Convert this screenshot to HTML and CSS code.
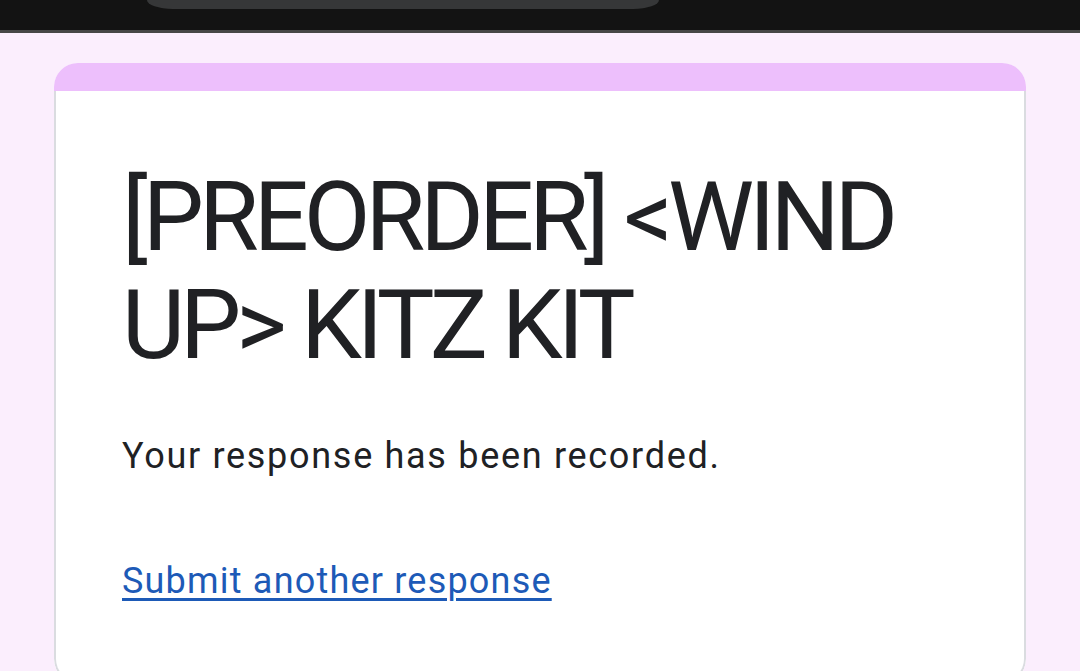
FILE: index.html
```html
<!DOCTYPE html>
<html>
<head>
<meta charset="utf-8">
<link rel="stylesheet" href="styles.css">
</head>
<body>
<div class="statusbar"><div class="pill"></div></div>
<main class="page">
  <section class="card">
    <div class="band"></div>
    <div class="content">
      <h1 class="title">[PREORDER] &lt;WIND UP&gt; KITZ KIT</h1>
      <p class="msg">Your response has been recorded.</p>
      <a class="link" href="#">Submit another response</a>
    </div>
  </section>
</main>
</body>
</html>
```
FILE: styles.css
```css
html, body {
  margin: 0;
  padding: 0;
  height: 100%;
  overflow: hidden;
}
body {
  background: #fbeefd;
  font-family: Roboto, "Noto Sans", sans-serif;
}
.statusbar {
  height: 30px;
  background: #131313;
  border-bottom: 3px solid #474747;
}
.pill {
  margin-left: 147px;
  width: 512px;
  height: 9px;
  background: #363738;
  border-bottom-left-radius: 26px 9px;
  border-bottom-right-radius: 26px 9px;
}
.page {
  padding: 30px 54px 0 54px;
}
.card {
  width: 972px;
  background: #ffffff;
  border-radius: 24px;
  overflow: hidden;
  box-sizing: border-box;
  height: 620px;
}
.band {
  height: 28px;
  background: #edbffc;
}
.content {
  border: 2px solid #dadce0;
  border-top: none;
  border-radius: 0 0 24px 24px;
  padding: 72px 0 60px 66px;
  height: 592px;
  box-sizing: border-box;
}
.title {
  margin: 0;
  font-weight: 400;
  font-size: 97px;
  line-height: 108px;
  letter-spacing: -5px;
  color: #202124;
  width: 840px;
}
.msg {
  margin: 55px 0 0 0;
  font-size: 36px;
  line-height: 45px;
  letter-spacing: 1.7px;
  color: #202124;
}
.link {
  display: inline-block;
  margin-top: 80px;
  font-size: 36px;
  line-height: 45px;
  letter-spacing: 1.2px;
  color: #1d5ab7;
  text-decoration: underline;
  text-underline-offset: 5px;
  text-decoration-thickness: 2.5px;
}
```
